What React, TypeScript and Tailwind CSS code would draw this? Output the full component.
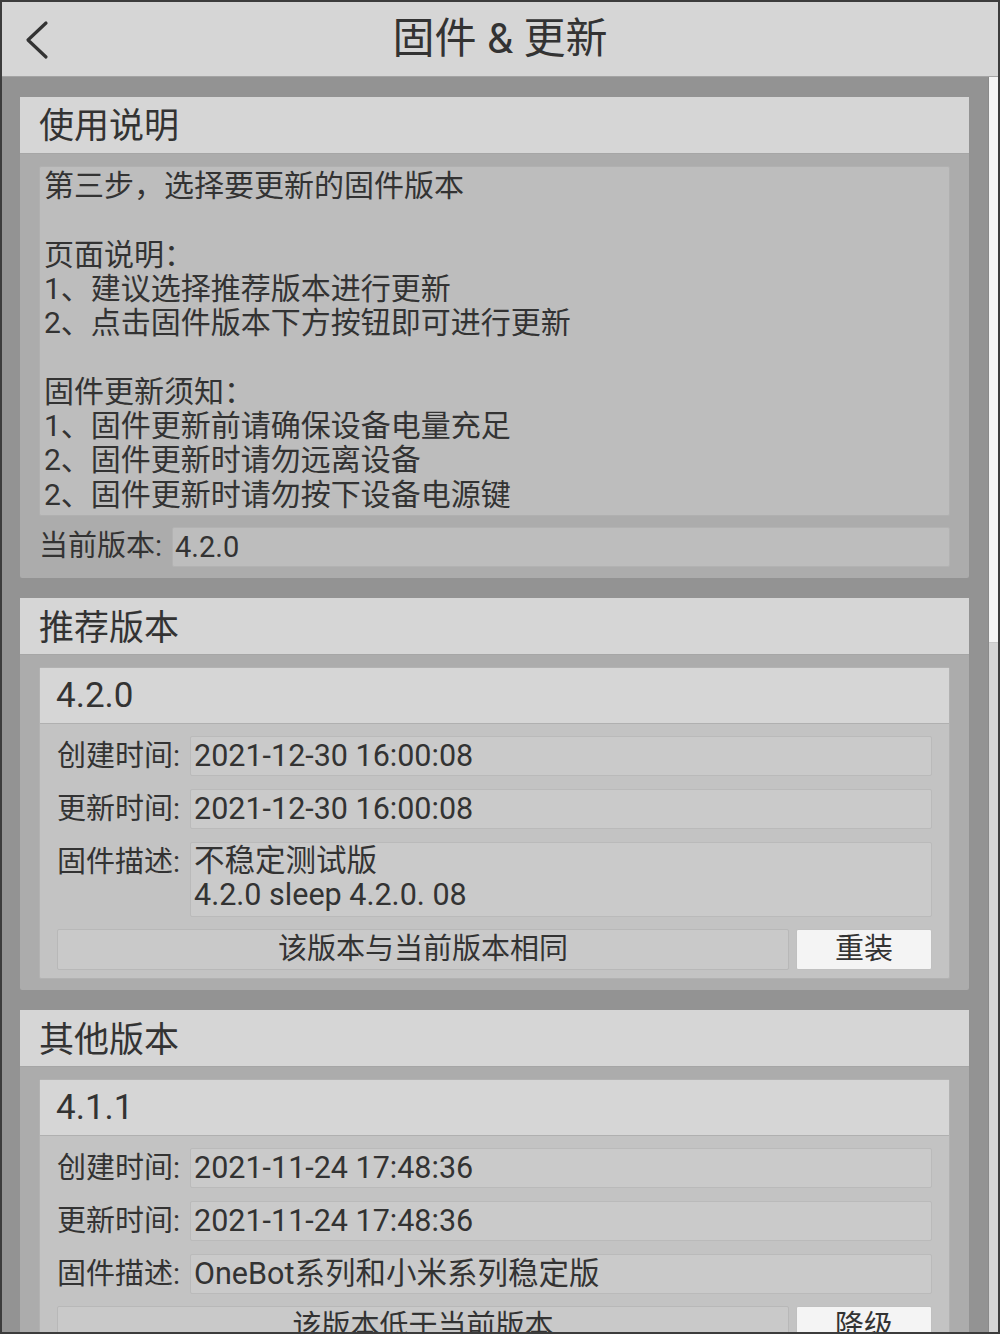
import React from 'react';

const font = { fontFamily: 'Roboto, "Noto Sans CJK SC", sans-serif' };

interface Version {
  name: string;
  created: string;
  updated: string;
  desc: string[];
  note: string;
  action: string;
}

const recommended: Version = {
  name: '4.2.0',
  created: '2021-12-30 16:00:08',
  updated: '2021-12-30 16:00:08',
  desc: ['不稳定测试版', '4.2.0 sleep 4.2.0. 08'],
  note: '该版本与当前版本相同',
  action: '重装',
};

const others: Version[] = [
  {
    name: '4.1.1',
    created: '2021-11-24 17:48:36',
    updated: '2021-11-24 17:48:36',
    desc: ['OneBot系列和小米系列稳定版'],
    note: '该版本低于当前版本',
    action: '降级',
  },
];

function Card({ title, children }: { title: string; children: React.ReactNode }) {
  return (
    <div className="w-[949px] shrink-0 bg-[#acacac] rounded-[2px]">
      <div className="h-[57px] bg-[#d6d6d6] border-b border-[#a6a6a6] flex items-center pl-[19px] pt-[5px] text-[35px] text-[#333]">
        {title}
      </div>
      {children}
    </div>
  );
}

function Field({ label, lines }: { label: string; lines: string[] }) {
  const tall = lines.length > 1;
  return (
    <div className="flex items-start">
      <div className={`w-[133px] shrink-0 text-[29px] text-[#333] ${tall ? 'leading-[38px] pt-[1px]' : 'leading-[40px]'}`}>
        {label}
      </div>
      <div
        className={`flex-1 bg-[#cacaca] border border-[#bababa] rounded-[2px] pl-[3px] text-[30.5px] text-[#333] ${
          tall ? 'pt-[1px] pb-[4px] leading-[34px]' : 'h-[40px] leading-[38px]'
        }`}
      >
        {lines.map((l, i) => (
          <div key={i}>{l}</div>
        ))}
      </div>
    </div>
  );
}

function VersionItem({ v }: { v: Version }) {
  return (
    <div className="bg-[#c3c3c3] border border-[#b2b2b2] rounded-[2px]">
      <div className="h-[56px] bg-[#d6d6d6] border-b border-[#b0b0b0] flex items-center pl-[16px] text-[35px] text-[#333]">
        {v.name}
      </div>
      <div className="px-[17px] pt-[12px] pb-[8px] flex flex-col gap-[13px]">
        <Field label="创建时间:" lines={[v.created]} />
        <Field label="更新时间:" lines={[v.updated]} />
        <Field label="固件描述:" lines={v.desc} />
        <div className="flex gap-[7px] -mt-[1px]">
          <div className="flex-1 h-[41px] bg-[#c9c9c9] border border-[#b8b8b8] rounded-[2px] flex items-center justify-center text-[29px] text-[#333]">
            {v.note}
          </div>
          <button className="w-[136px] h-[41px] bg-[#f4f4f4] border border-[#c0c0c0] rounded-[2px] flex items-center justify-center text-[29px] text-[#333]">
            {v.action}
          </button>
        </div>
      </div>
    </div>
  );
}

export default function App() {
  return (
    <div style={font} className="w-[1000px] h-[1334px] border-2 border-[#3c3c3c] flex flex-col overflow-hidden bg-[#939393]">
      {/* Top bar */}
      <div className="h-[75px] shrink-0 bg-[#d6d6d6] border-b border-[#a4a4a4] relative flex items-center justify-center">
        <svg className="absolute left-[20px] top-[17px]" width="30" height="42" viewBox="0 0 30 42">
          <path d="M24 4 L6 21 L24 38" fill="none" stroke="#333" strokeWidth="3.2" strokeLinecap="round" strokeLinejoin="round" />
        </svg>
        <div className="text-[42px] text-[#333] -mt-[1px]">固件 &amp; 更新</div>
      </div>

      <div className="flex-1 flex min-h-0">
        <div className="flex-1 min-w-0 pl-[18px] pt-[20px] flex flex-col gap-[20px] overflow-hidden">
          <Card title="使用说明">
            <div className="px-[19px] pt-[12px] pb-[10px]">
              <div className="bg-[#bdbdbd] border border-[#b0b0b0] rounded-[2px] pl-[4px] pt-[2px] pb-[3px] text-[30px] leading-[34.3px] text-[#333]">
                <div>第三步，选择要更新的固件版本</div>
                <div className="h-[34.3px]" />
                <div>页面说明：</div>
                <div>1、建议选择推荐版本进行更新</div>
                <div>2、点击固件版本下方按钮即可进行更新</div>
                <div className="h-[34.3px]" />
                <div>固件更新须知：</div>
                <div>1、固件更新前请确保设备电量充足</div>
                <div>2、固件更新时请勿远离设备</div>
                <div>2、固件更新时请勿按下设备电源键</div>
              </div>
              <div className="flex items-center mt-[9px]">
                <div className="w-[133px] shrink-0 text-[29px] text-[#333]">当前版本:</div>
                <div className="flex-1 h-[40px] bg-[#bdbdbd] border border-[#b2b2b2] rounded-[2px] pl-[2px] text-[29px] leading-[38px] text-[#333]">
                  4.2.0
                </div>
              </div>
            </div>
          </Card>

          <Card title="推荐版本">
            <div className="px-[19px] pt-[12px] pb-[11px]">
              <VersionItem v={recommended} />
            </div>
          </Card>

          <Card title="其他版本">
            <div className="px-[19px] pt-[12px] pb-[10px] flex flex-col gap-[12px]">
              {others.map((v) => (
                <VersionItem key={v.name} v={v} />
              ))}
            </div>
          </Card>
        </div>

        {/* Scrollbar */}
        <div className="w-[10px] shrink-0 flex flex-col bg-[#d4d4d4] border-l border-[#8a8a8a]">
          <div className="h-[566px] bg-[#f4f4f4] border-b border-[#c8c8c8]" />
        </div>
      </div>
    </div>
  );
}
